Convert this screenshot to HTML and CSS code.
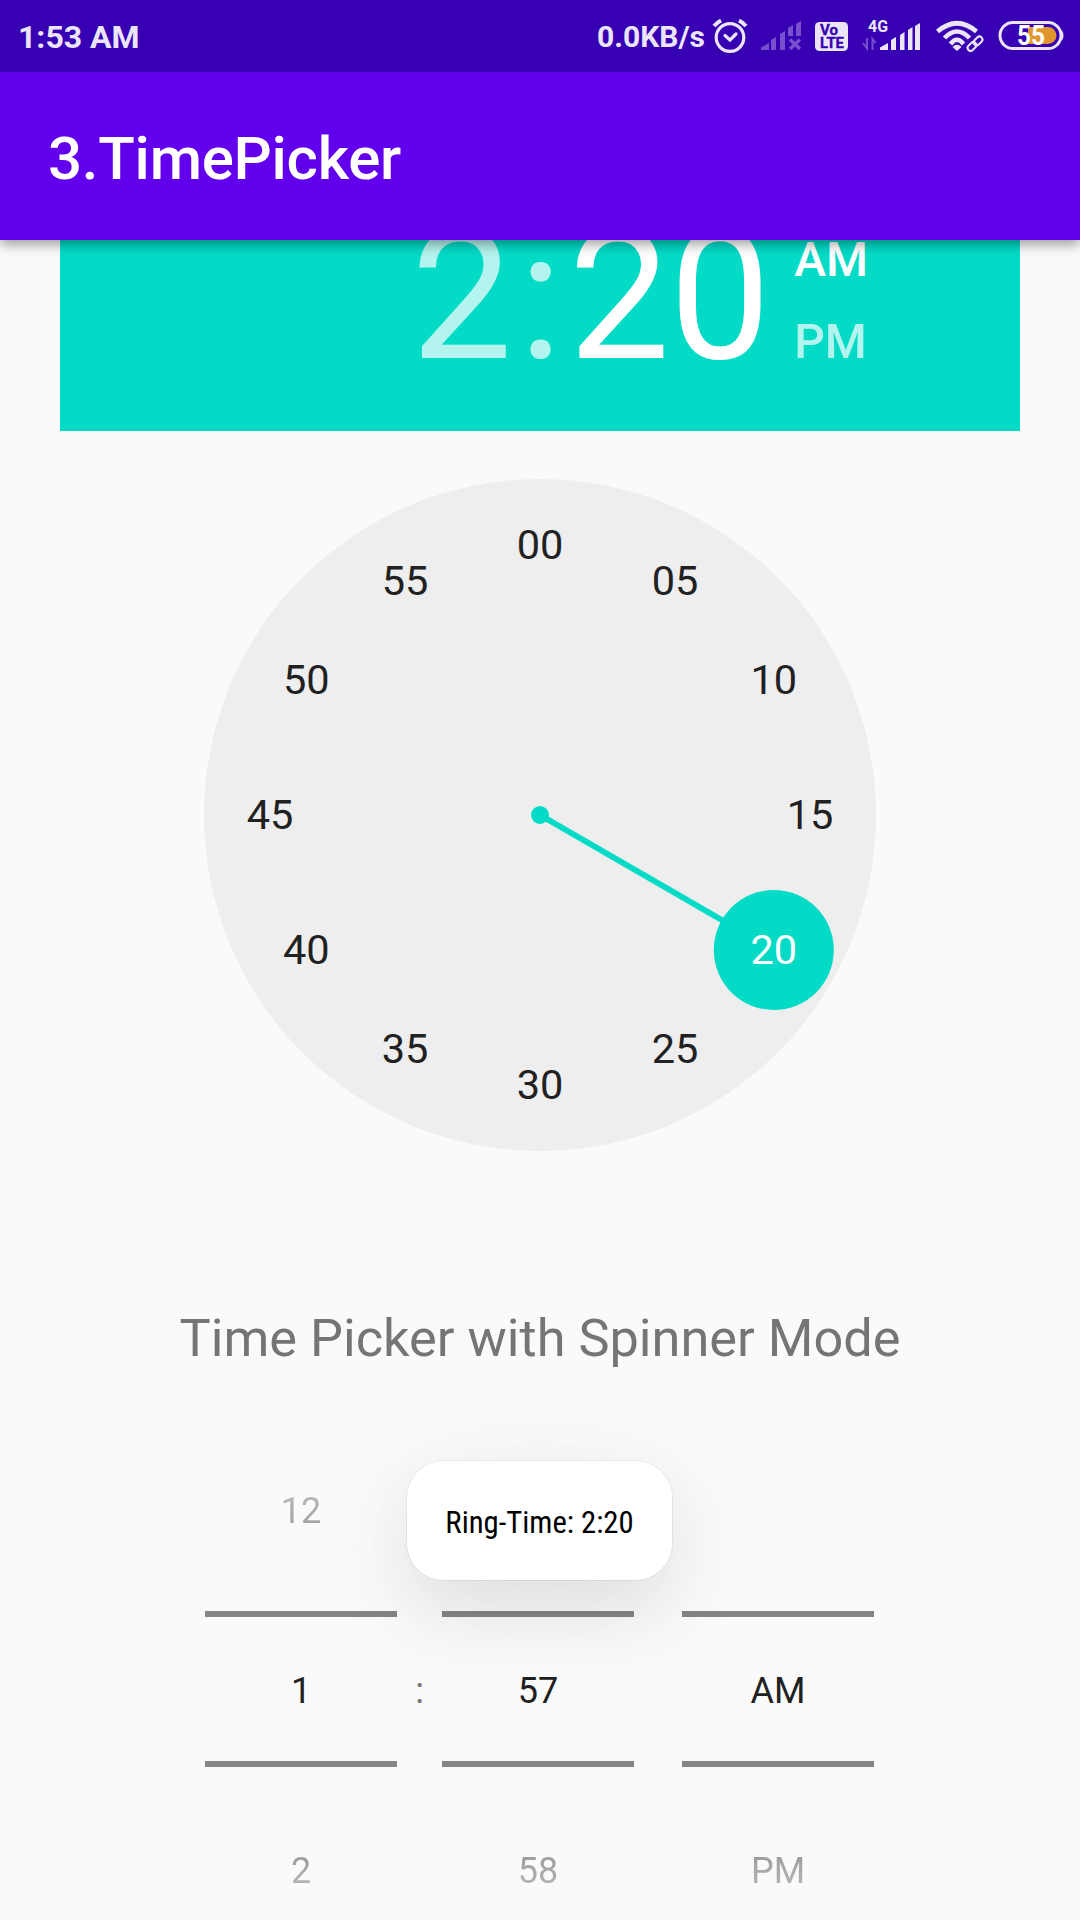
FILE: index.html
```html
<!DOCTYPE html>
<html lang="en">
<head>
<meta charset="utf-8">
<title>3.TimePicker</title>
<link rel="stylesheet" href="styles.css">
</head>
<body>
<div class="screen">
  <header class="status-bar">
    <span class="clock">1:53 AM</span>
    <span class="speed">0.0KB/s</span>
    <svg class="status-icons" width="370" height="72" viewBox="710 0 370 72">
      <g fill="none" stroke="#ebe5f7" stroke-width="3.2" stroke-linecap="round">
        <circle cx="730" cy="37.5" r="13.8"/>
        <path d="M725 35.5l5 4.500l6-6"/>
        <path d="M714 26q3-3.500 7-5.500M746 26q-3-3.500-7-5.500" stroke-width="4" stroke-linecap="butt"/>
      </g>
      <g fill="#7850cd">
        <path d="M761 50v-2.500l8-4.500v7zM771 50v-10l5-3v13zM780 50v-16l5-3v19zM788 36v-8l5-3v11zM796 36v-12l5-3v15z"/>
        <path d="M790 39.500l10 9.500M800 39.500l-10 9.500" stroke="#7850cd" stroke-width="3.500"/>
      </g>
      <rect x="815" y="22" width="33" height="29" rx="4.500" fill="#ebe5f7"/>
      <g class="volte">
        <text x="820" y="34.500" textLength="18" lengthAdjust="spacingAndGlyphs">Vo</text>
        <text x="820" y="47.700" textLength="24" lengthAdjust="spacingAndGlyphs">LTE</text>
      </g>
      <text class="net" x="868" y="31.500" textLength="20" lengthAdjust="spacingAndGlyphs">4G</text>
      <path d="M863 43l4 5.500V38M872.500 50V39l3 4" fill="none" stroke="#7850cd" stroke-width="2"/>
      <path fill="#ebe5f7" d="M880 50v-2.500l8-4.500v7zM891 50v-10l5-3v13zM900 50v-15l4.500-3v18zM908 50v-20l4.500-3v23zM915 50v-24l5-3v27z"/>
      <g fill="none" stroke="#ebe5f7" stroke-width="4.600">
        <path d="M937.500 31.500q19.500-16.500 39 0M944.500 38q12.500-13 25 0M950.500 44q6.500-8.500 13 0"/>
      </g>
      <path d="M957 51l-4.500-4q4.500-4.500 9 0z" fill="#ebe5f7"/>
      <g fill="none" stroke="#ebe5f7" stroke-width="2">
        <rect x="-5" y="-3" width="10" height="6" rx="3" transform="translate(978 41) rotate(-45)"/>
        <rect x="-5" y="-3" width="10" height="6" rx="3" transform="translate(972 46.500) rotate(-45)"/>
      </g>
      <rect x="1000" y="22.500" width="61" height="26" rx="13" fill="none" stroke="#ebe5f7" stroke-width="3"/>
      <path d="M1061 31q2.500 4.500 0 9" fill="none" stroke="#ebe5f7" stroke-width="2.500"/>
      <path d="M1028 27h20a8 8 0 0 1 0 17h-20z" fill="#e0962f"/>
      <text class="battery" x="1017" y="45" textLength="28" lengthAdjust="spacingAndGlyphs">55</text>
    </svg>
  </header>

  <div class="app-bar"><h1>3.TimePicker</h1></div>

  <main class="content">
    <section class="time-header">
      <div class="time"><span class="dim">2</span><span class="dim colon">:</span><span>20</span></div>
      <div class="ampm"><span>AM</span><span class="dim">PM</span></div>
    </section>

    <svg class="dial" width="672" height="672" viewBox="-336 -336 672 672">
      <circle r="336" fill="#eee"/>
      <path d="M0 0L233.800 135" stroke="#03dbc7" stroke-width="6"/>
      <circle r="9" fill="#03dbc7"/>
      <circle cx="233.800" cy="135" r="60" fill="#03dbc7"/>
      <g class="dial-labels">
        <text x="0" y="-256">00</text>
        <text x="135" y="-219.800">05</text>
        <text x="233.800" y="-121">10</text>
        <text x="270" y="14">15</text>
        <text class="selected" x="233.800" y="149">20</text>
        <text x="135" y="247.800">25</text>
        <text x="0" y="284">30</text>
        <text x="-135" y="247.800">35</text>
        <text x="-233.800" y="149">40</text>
        <text x="-270" y="14">45</text>
        <text x="-233.800" y="-121">50</text>
        <text x="-135" y="-219.800">55</text>
      </g>
    </svg>

    <h2>Time Picker with Spinner Mode</h2>

    <section class="spinner">
      <div class="wheel"><span class="faded up">12</span><span class="current">1</span><span class="faded">2</span></div>
      <div class="separator">:</div>
      <div class="wheel"><span class="faded up">56</span><span class="current">57</span><span class="faded">58</span></div>
      <div class="wheel period"><span class="faded up"></span><span class="current">AM</span><span class="faded">PM</span></div>
    </section>
  </main>

  <div class="toast"><span>Ring-Time: 2:20</span></div>
</div>
</body>
</html>
```

FILE: styles.css
```css
* { box-sizing: border-box; }
body { margin: 0; background: #fafafa; font-family: Roboto, sans-serif; }
.screen { position: relative; width: 1080px; height: 1920px; overflow: hidden; display: flex; flex-direction: column; }

.status-bar { flex: none; height: 72px; background: #3700b3; color: #ebe5f7; display: flex; align-items: center; padding-left: 18px; font-size: 30px; font-weight: 700; }
.clock { flex: 1; font-size: 32px; padding-top: 1px; }
.speed { margin-right: 5px; padding-top: 1px; }
.status-icons { flex: none; display: block; }
.volte { font: 700 14px Roboto, sans-serif; fill: #3700b3; stroke: #3700b3; stroke-width: .3px; }
.net { font: 700 16px Roboto, sans-serif; fill: #ebe5f7; }
.battery { font: 700 27px Roboto, sans-serif; fill: #fff; }

.app-bar { flex: none; height: 168px; background: #6200ee; color: #fff; display: flex; align-items: center; padding: 4px 48px 0; position: relative; z-index: 1; clip-path: inset(0 0 -30px 0); box-shadow: 0 4px 12px rgba(0,0,0,.4); }
h1 { margin: 0; font-size: 60px; font-weight: 500; letter-spacing: -.25px; }

.content { flex: 1; display: flex; flex-direction: column; align-items: center; min-height: 0; }
.time-header { flex: none; width: 960px; height: 288px; margin-top: -97px; padding: 0 152px 48px 0; background: #03dbc7; color: #fff; display: flex; justify-content: flex-end; align-items: flex-end; gap: 24px; }
.time { font-size: 180px; line-height: 210px; height: 191px; display: flex; letter-spacing: -.5px; }
.colon { width: 57px; text-align: center; }
.ampm { display: flex; flex-direction: column; font-size: 48px; font-weight: 500; line-height: 82px; }
.dim { opacity: .7; }

.dial { flex: none; display: block; margin-top: 48px; }
.dial-labels { font-size: 41.5px; text-anchor: middle; fill: #212121; }
.selected { fill: #fff; }

h2 { margin: 155px 0 0; font-size: 52.3px; line-height: 64px; font-weight: 400; color: #757575; white-space: nowrap; }

.spinner { display: flex; width: 669px; margin: 51px 1px 0 0; font-size: 36px; color: #212121; text-align: center; }
.wheel { width: 192px; display: flex; flex-direction: column; }
.wheel span { height: 180px; line-height: 180px; }
.wheel .current { height: 156px; margin: 10px 0 14px; border: solid #858585; border-width: 6px 0; line-height: 148px; }
.separator { width: 45px; padding-top: 180px; line-height: 180px; color: #757575; }
.period { margin-left: 48px; }
.faded { color: transparent; background: linear-gradient(#9a9a9a 40%, #b8b8b8 60%); -webkit-background-clip: text; background-clip: text; }
.up { background-image: linear-gradient(#b8b8b8 40%, #a0a0a0 60%); }

.toast { position: absolute; left: 407px; top: 1461px; width: 265px; height: 119px; padding-top: 3px; border-radius: 37px; background: rgba(255,255,255,.98); display: flex; align-items: center; justify-content: center; font-size: 30.7px; font-stretch: 75%; color: #000; white-space: nowrap; box-shadow: 0 0 0 1px rgba(0,0,0,.06), 0 30px 70px rgba(0,0,0,.085), 0 20px 150px rgba(0,0,0,.045); }
```
